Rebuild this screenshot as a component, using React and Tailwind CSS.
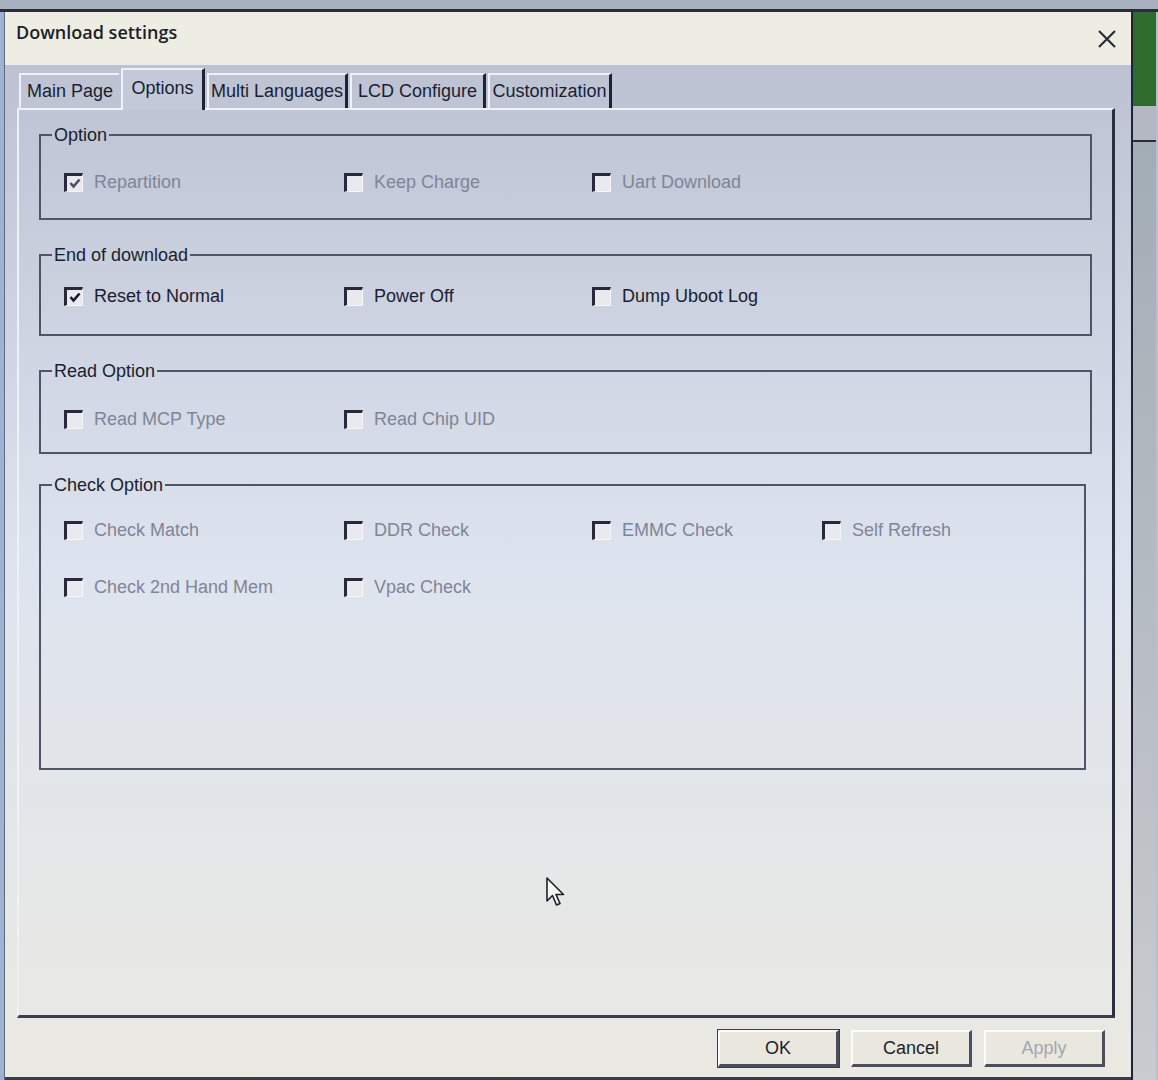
import React from 'react';

const font = { fontFamily: '"Liberation Sans", Arial, sans-serif' };

const tabs = [
  { label: 'Main Page', w: 'w-[100px]' },
  { label: 'Options', w: 'w-[84px]', active: true },
  { label: 'Multi Languages', w: 'w-[141px]' },
  { label: 'LCD Configure', w: 'w-[136px]' },
  { label: 'Customization', w: 'w-[124px]' },
];

function Box({ checked, dim }) {
  return (
    <span className="flex h-[19px] w-[19px] shrink-0 items-center justify-center border-t-[3px] border-l-[3px] border-r border-b border-t-[#262a3a] border-l-[#262a3a] border-r-[#f6f6f4] border-b-[#f6f6f4] bg-[#e8eaef]">
      {checked && (
        <svg width="12" height="11" viewBox="0 0 12 11">
          <path d="M1.5 5 L4.5 8.5 L10.5 1.5" fill="none" stroke={dim ? '#4a4f66' : '#15182a'} strokeWidth="2.6" />
        </svg>
      )}
    </span>
  );
}

function Check({ label, checked, dim }) {
  return (
    <label className="flex h-[22px] items-center gap-[11px]">
      <Box checked={checked} dim={dim} />
      <span className={`text-[18px] leading-[22px] ${dim ? 'text-[#7f8598]' : 'text-[#1a1e30]'}`}>{label}</span>
    </label>
  );
}

function Group({ title, children, className = '' }) {
  return (
    <fieldset className={`border-2 border-[#4f5566] p-0 ${className}`}>
      <legend className="ml-[11px] px-[2px] text-[18px] leading-[22px] text-[#1a1e30]">{title}</legend>
      {children}
    </fieldset>
  );
}

function Row({ children, className = '' }) {
  return <div className={`grid grid-cols-[280px_248px_230px_1fr] pl-[23px] ${className}`}>{children}</div>;
}

function Button({ children, primary, disabled }) {
  return (
    <button
      className={`flex h-[37px] w-[121px] items-center justify-center border-t-2 border-l-2 border-r-[3px] border-b-[3px] border-t-[#fbfbf7] border-l-[#fbfbf7] border-r-[#4a4e5e] border-b-[#4a4e5e] bg-[#e9e7de] text-[18px] ${
        primary ? 'outline outline-1 outline-[#3a3e4c]' : ''
      } ${disabled ? 'text-[#a4a6ae]' : 'text-[#1c1f2c]'}`}
    >
      {children}
    </button>
  );
}

export default function App() {
  return (
    <div className="flex h-[1080px] w-[1158px] flex-col overflow-hidden bg-[#b9bfcc]" style={font}>
      <div className="h-[12px] shrink-0 border-b-[3px] border-[#2b2e3a] bg-[#a9b0c0]" />

      <div className="flex flex-1">
        <div className="w-[5px] border-r border-[#5d6a84] bg-[#9fb2d2]" />

        <div className="flex w-[1128px] flex-col border-r-2 border-[#1f2333]">
          <div className="flex h-[53px] shrink-0 items-center justify-between bg-[#eeede3] pl-[11px] pr-[14px]">
            <span className="mb-[12px] text-[18px] font-semibold text-[#1c1e28]" style={{ fontFamily: '"Open Sans", "Noto Sans", sans-serif' }}>
              Download settings
            </span>
            <svg width="20" height="20" viewBox="0 0 20 20">
              <path d="M2 2 L18 18 M18 2 L2 18" stroke="#2a2c36" strokeWidth="2.2" />
            </svg>
          </div>

          <div className="flex flex-1 flex-col bg-gradient-to-b from-[#bcc2d2] via-[#dee4ef] via-50% to-[#eae9e2]">
            <div className="flex h-[43px] shrink-0 items-end gap-[2px] pl-[14px]">
              {tabs.map((t) => (
                <div
                  key={t.label}
                  className={`flex items-center justify-center border-t-2 border-l-2 border-t-[#eef1f6] border-l-[#eef1f6] text-[18px] text-[#1a1e30] ${t.w} ${
                    t.active ? 'relative z-10 -mb-[2px] h-[42px] border-r-[3px] border-r-[#1e2236] bg-[#c3c9d8] pb-[4px]' : 'h-[35px]'
                  } ${!t.active && t.label !== 'Main Page' ? 'border-r-[3px] border-r-[#1e2236]' : ''}`}
                >
                  {t.label}
                </div>
              ))}
            </div>

            <div className="relative ml-[12px] mr-[16px] flex h-[910px] shrink-0 flex-col gap-[22px] border-t-2 border-l-2 border-r-[3px] border-b-[3px] border-t-[#f0f3f8] border-l-[#eef1f6] border-r-[#2a2e40] border-b-[#3a3e4c] pl-[20px] pr-[20px] pt-[14px]">
              <Group title="Option">
                <Row className="pt-[25px] pb-[25px]">
                  <Check label="Repartition" checked dim />
                  <Check label="Keep Charge" dim />
                  <Check label="Uart Download" dim />
                </Row>
              </Group>

              <Group title="End of download" className="mt-[2px]">
                <Row className="pt-[19px] pb-[27px]">
                  <Check label="Reset to Normal" checked />
                  <Check label="Power Off" />
                  <Check label="Dump Uboot Log" />
                </Row>
              </Group>

              <Group title="Read Option" className="mt-[2px]">
                <Row className="pt-[26px] pb-[22px]">
                  <Check label="Read MCP Type" dim />
                  <Check label="Read Chip UID" dim />
                </Row>
              </Group>

              <Group title="Check Option" className="-mt-[2px] mr-[6px]">
                <div className="flex h-[272px] flex-col gap-[35px] pt-[23px]">
                  <Row>
                    <Check label="Check Match" dim />
                    <Check label="DDR Check" dim />
                    <Check label="EMMC Check" dim />
                    <Check label="Self Refresh" dim />
                  </Row>
                  <Row>
                    <Check label="Check 2nd Hand Mem" dim />
                    <Check label="Vpac Check" dim />
                  </Row>
                </div>
              </Group>

              <svg className="absolute left-[527px] top-[767px]" width="22" height="32" viewBox="0 0 22 32">
                <path d="M1 1 L1 24 L6.5 18.5 L10.5 28 L14 26.5 L10 17.5 L17.5 17.5 Z" fill="#f7f7f2" stroke="#1c1f2e" strokeWidth="1.6" strokeLinejoin="round" />
              </svg>
            </div>

            <div className="flex flex-1 items-start justify-end gap-[12px] pr-[26px] pt-[12px]">
              <Button primary>OK</Button>
              <Button>Cancel</Button>
              <Button disabled>Apply</Button>
            </div>
          </div>

          <div className="h-[3px] shrink-0 bg-[#3a3d48]" />
        </div>

        <div className="flex w-[23px] flex-col">
          <div className="h-[94px] bg-[#2f6b2d]" />
          <div className="h-[36px] border-b-2 border-[#2a2e3a] bg-[#b4b8c2]" />
          <div className="flex-1 bg-gradient-to-b from-[#a3adb6] to-[#c9cbcf]" />
        </div>
      </div>
    </div>
  );
}
